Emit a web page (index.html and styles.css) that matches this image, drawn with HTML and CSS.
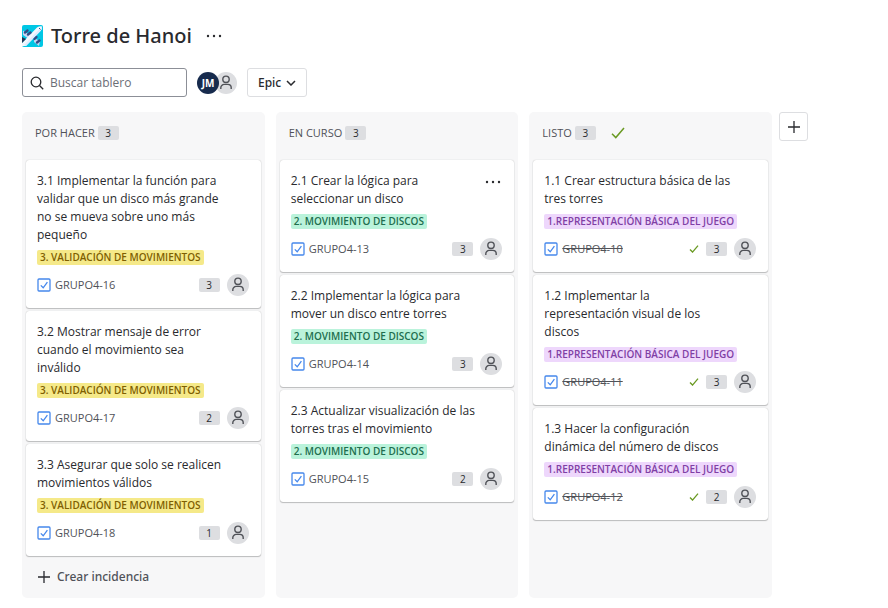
FILE: index.html
```
<!DOCTYPE html>
<html lang="es">
<head>
<meta charset="utf-8">
<meta name="viewport" content="width=device-width, initial-scale=1">
<title>Torre de Hanoi</title>
<link rel="stylesheet" href="styles.css">
</head>
<body>
<svg class="sprite" aria-hidden="true">
  <symbol id="person" viewBox="0 0 22 22"><circle cx="11" cy="7.3" r="3.2" /><path d="M5.800 17v-1.200a3.400 3.400 0 0 1 3.400-3.400h3.600a3.400 3.400 0 0 1 3.400 3.400V17" /></symbol>
  <symbol id="task" viewBox="0 0 14 14"><rect x="1" y="1" width="12" height="12" rx="1" /><path d="M3.8 7.4 6.2 9.8 10.4 4.2" /></symbol>
  <symbol id="check" viewBox="0 0 14 12"><path d="M1 6.8 4.8 10.6 13 1" /></symbol>
  <symbol id="plus" viewBox="0 0 14 14"><path d="M7 1v12M1 7h12" /></symbol>
  <symbol id="dots" viewBox="0 0 16 4"><circle cx="2" cy="2" r="1.2" /><circle cx="8" cy="2" r="1.2" /><circle cx="14" cy="2" r="1.2" /></symbol>
</svg>

<header class="header">
  <svg class="logo" viewBox="0 0 21 22" aria-hidden="true">
    <rect width="21" height="22" rx="2" fill="#00c7e5" />
    <path d="M1 5.500 4.500 8 10 10 7 14 1 10z" fill="#c5d5f2" />
    <path d="M12 13 18 16 17 21 12 17z" fill="#c5d5f2" />
    <path d="M0 18 15 2.500Q18 .8 20 1.500 20.500 4 18.500 6L4 21H0z" fill="#f4f7fd" />
    <path d="M4 21 18.500 6Q20.500 4 20 1.500L2 20z" fill="#deebff" />
    <path d="M0 12 4 14 0 18z" fill="#253858" />
    <path d="M3 7.500 5.500 5.500M6 9.500 8.500 7.500M12.500 14 14.500 12M15 17.500 17.500 15.500" stroke="#344c86" stroke-width="2.400" stroke-linecap="round" />
    <path d="m17 3 1.500 1.500" stroke="#344c86" />
  </svg>
  <h1 class="title">Torre de Hanoi</h1>
  <button class="icon-button" type="button" aria-label="Más acciones"><svg class="dots"><use href="#dots" /></svg></button>
</header>

<div class="toolbar">
  <label class="search">
    <svg class="search-icon" viewBox="0 0 14 14" aria-hidden="true"><circle cx="6" cy="6" r="4.800" /><path d="m9.500 9.500 3.700 3.700" /></svg>
    <input class="search-input" type="text" placeholder="Buscar tablero" aria-label="Buscar tablero">
  </label>
  <div class="people">
    <span class="initials">JM</span>
    <svg class="avatar"><use href="#person" /></svg>
  </div>
  <button class="filter" type="button">Epic <svg class="chevron" viewBox="0 0 10 6" aria-hidden="true"><path d="m1 1 4 4 4-4" /></svg></button>
</div>

<main class="board">
  <section class="column">
    <h2 class="column-head">POR HACER <span class="count">3</span></h2>
    <article class="card">
      <p class="card-title">3.1 Implementar la función para validar que un disco más grande no se mueva sobre uno más pequeño</p>
      <span class="epic yellow">3. VALIDACIÓN DE MOVIMIENTOS</span>
      <div class="card-foot"><svg class="task"><use href="#task" /></svg><a class="key" href="#g16">GRUPO4-16</a><span class="count">3</span><svg class="avatar"><use href="#person" /></svg></div>
    </article>
    <article class="card">
      <p class="card-title">3.2 Mostrar mensaje de error cuando el movimiento sea inválido</p>
      <span class="epic yellow">3. VALIDACIÓN DE MOVIMIENTOS</span>
      <div class="card-foot"><svg class="task"><use href="#task" /></svg><a class="key" href="#g17">GRUPO4-17</a><span class="count">2</span><svg class="avatar"><use href="#person" /></svg></div>
    </article>
    <article class="card">
      <p class="card-title">3.3 Asegurar que solo se realicen movimientos válidos</p>
      <span class="epic yellow">3. VALIDACIÓN DE MOVIMIENTOS</span>
      <div class="card-foot"><svg class="task"><use href="#task" /></svg><a class="key" href="#g18">GRUPO4-18</a><span class="count">1</span><svg class="avatar"><use href="#person" /></svg></div>
    </article>
    <button class="create" type="button"><svg class="plus"><use href="#plus" /></svg>Crear incidencia</button>
  </section>

  <section class="column">
    <h2 class="column-head">EN CURSO <span class="count">3</span></h2>
    <article class="card">
      <div class="card-top">
        <p class="card-title">2.1 Crear la lógica para seleccionar un disco</p>
        <button class="icon-button card-menu" type="button" aria-label="Acciones"><svg class="dots"><use href="#dots" /></svg></button>
      </div>
      <span class="epic green">2. MOVIMIENTO DE DISCOS</span>
      <div class="card-foot"><svg class="task"><use href="#task" /></svg><a class="key" href="#g13">GRUPO4-13</a><span class="count">3</span><svg class="avatar"><use href="#person" /></svg></div>
    </article>
    <article class="card">
      <p class="card-title">2.2 Implementar la lógica para mover un disco entre torres</p>
      <span class="epic green">2. MOVIMIENTO DE DISCOS</span>
      <div class="card-foot"><svg class="task"><use href="#task" /></svg><a class="key" href="#g14">GRUPO4-14</a><span class="count">3</span><svg class="avatar"><use href="#person" /></svg></div>
    </article>
    <article class="card">
      <p class="card-title">2.3 Actualizar visualización de las torres tras el movimiento</p>
      <span class="epic green">2. MOVIMIENTO DE DISCOS</span>
      <div class="card-foot"><svg class="task"><use href="#task" /></svg><a class="key" href="#g15">GRUPO4-15</a><span class="count">2</span><svg class="avatar"><use href="#person" /></svg></div>
    </article>
  </section>

  <section class="column">
    <h2 class="column-head">LISTO <span class="count">3</span><svg class="check"><use href="#check" /></svg></h2>
    <article class="card">
      <p class="card-title">1.1 Crear estructura básica de las tres torres</p>
      <span class="epic purple">1.REPRESENTACIÓN BÁSICA DEL JUEGO</span>
      <div class="card-foot"><svg class="task"><use href="#task" /></svg><a class="key done" href="#g10">GRUPO4-10</a><svg class="check small"><use href="#check" /></svg><span class="count">3</span><svg class="avatar"><use href="#person" /></svg></div>
    </article>
    <article class="card">
      <p class="card-title">1.2 Implementar la representación visual de los discos</p>
      <span class="epic purple">1.REPRESENTACIÓN BÁSICA DEL JUEGO</span>
      <div class="card-foot"><svg class="task"><use href="#task" /></svg><a class="key done" href="#g11">GRUPO4-11</a><svg class="check small"><use href="#check" /></svg><span class="count">3</span><svg class="avatar"><use href="#person" /></svg></div>
    </article>
    <article class="card">
      <p class="card-title">1.3 Hacer la configuración dinámica del número de discos</p>
      <span class="epic purple">1.REPRESENTACIÓN BÁSICA DEL JUEGO</span>
      <div class="card-foot"><svg class="task"><use href="#task" /></svg><a class="key done" href="#g12">GRUPO4-12</a><svg class="check small"><use href="#check" /></svg><span class="count">2</span><svg class="avatar"><use href="#person" /></svg></div>
    </article>
  </section>

  <button class="add-column" type="button" aria-label="Añadir columna"><svg class="plus"><use href="#plus" /></svg></button>
</main>
</body>
</html>
```
FILE: styles.css
```
* { box-sizing: border-box; }

body {
  margin: 0;
  padding: 22px 80px 10px 22px;
  background: #fff;
  color: #292a2e;
  font: 12px/18px "Segoe UI", "Open Sans", sans-serif;
}

button {
  font: inherit;
  color: inherit;
  cursor: pointer;
}

svg { flex: none; }

.sprite {
  position: absolute;
  width: 0;
  height: 0;
}

.header {
  display: flex;
  align-items: center;
  gap: 8px;
  height: 28px;
}

.logo {
  width: 21px;
  height: 22px;
}

.title,
.filter,
.create {
  font-family: "Segoe UI", "Noto Sans", sans-serif;
  font-weight: 500;
}

.title {
  margin: 0;
  font-size: 20px;
  line-height: 28px;
}

.icon-button {
  display: flex;
  padding: 6px;
  border: 0;
  background: none;
}

.dots {
  width: 16px;
  height: 4px;
  fill: currentColor;
}

.toolbar {
  display: flex;
  align-items: center;
  gap: 10px;
  margin: 18px 0 15px;
}

.search {
  display: flex;
  align-items: center;
  gap: 6px;
  width: 165px;
  height: 29px;
  padding: 0 7px;
  border: 1px solid #8c8f97;
  border-radius: 3px;
}

.search-icon {
  width: 14px;
  height: 14px;
  fill: none;
  stroke: #292a2e;
  stroke-width: 1.3;
}

.search-input {
  flex: 1;
  min-width: 0;
  padding: 1px 0 0;
  border: 0;
  outline: 0;
  background: none;
  font: inherit;
}

.search-input::placeholder { color: #6b6e76; }

.people { display: flex; }

.initials {
  z-index: 1;
  width: 22px;
  height: 22px;
  border-radius: 50%;
  background: #172b4d;
  color: #fff;
  font-size: 10px;
  line-height: 22px;
  font-weight: 700;
  text-align: center;
}

.avatar {
  width: 22px;
  height: 22px;
  border-radius: 50%;
  background: #dddee1;
  fill: none;
  stroke: #505258;
  stroke-width: 1.4;
}

.people .avatar { margin-left: -4px; }

.filter {
  display: flex;
  align-items: center;
  gap: 5px;
  height: 29px;
  padding: 0 10px;
  border: 1px solid #dddee1;
  border-radius: 3px;
  background: #fff;
}

.chevron {
  width: 10px;
  height: 6px;
  fill: none;
  stroke: #292a2e;
  stroke-width: 1.5;
}

.board {
  display: flex;
  gap: 11px;
}

.column {
  display: flex;
  flex: 1 1 0;
  flex-direction: column;
  gap: 3px;
  min-width: 0;
  padding: 0 4px 3px;
  border-radius: 5px;
  background: #f7f7f8;
}

.column-head {
  display: flex;
  align-items: center;
  gap: 3px;
  height: 45px;
  margin: 0;
  padding: 0 9px 3px;
  color: #505258;
  font-size: 11px;
  font-weight: 400;
}

.count {
  width: 21px;
  height: 14px;
  border-radius: 2px;
  background: #dddee1;
  color: #292a2e;
  font-size: 10px;
  line-height: 14px;
  font-weight: 400;
  text-align: center;
}

.check {
  width: 14px;
  height: 12px;
  margin-left: 12px;
  fill: none;
  stroke: #6a9a23;
  stroke-width: 1.5;
}

.check.small {
  width: 10px;
  height: 8px;
  margin: 0;
  stroke-width: 2;
}

.card {
  padding: 12px 12px 12px 11px;
  border-radius: 3px;
  background: #fff;
  box-shadow: 0 1px 1px #1e1f2140, 0 0 1px #1e1f214f;
}

.card-top {
  display: flex;
  justify-content: space-between;
}

.card-title {
  max-width: 188px;
  margin: 0;
}

.card-menu {
  align-self: flex-start;
  padding: 8px 1px 0 0;
}

.epic {
  display: block;
  width: fit-content;
  margin: 6px 0 9px;
  padding: 0 3px;
  border-radius: 2px;
  font-size: 10px;
  line-height: 15px;
  font-weight: 600;
  white-space: nowrap;
}

.yellow { background: #f5e989; color: #7f5f01; }
.green { background: #baf3db; color: #216e4e; }
.purple { background: #eed7fc; color: #803fa5; }

.card-foot {
  display: flex;
  align-items: center;
  gap: 7px;
}

.task {
  width: 14px;
  height: 14px;
  margin-right: -3px;
  fill: none;
  stroke: #4688ec;
  stroke-width: 1.3;
}

.key {
  margin-right: auto;
  color: #505258;
  font-size: 11px;
  text-decoration: none;
}

.key.done { text-decoration: line-through; }

.create {
  display: flex;
  align-items: center;
  gap: 6px;
  padding: 9px 11px;
  border: 0;
  background: none;
  color: #505258;
}

.plus {
  width: 14px;
  height: 14px;
  fill: none;
  stroke: #292a2e;
  stroke-width: 1.3;
}

.add-column {
  display: grid;
  flex: none;
  place-items: center;
  width: 29px;
  height: 29px;
  margin-left: -4px;
  padding: 0;
  border: 1px solid #dddee1;
  border-radius: 3px;
  background: #fff;
}
```
